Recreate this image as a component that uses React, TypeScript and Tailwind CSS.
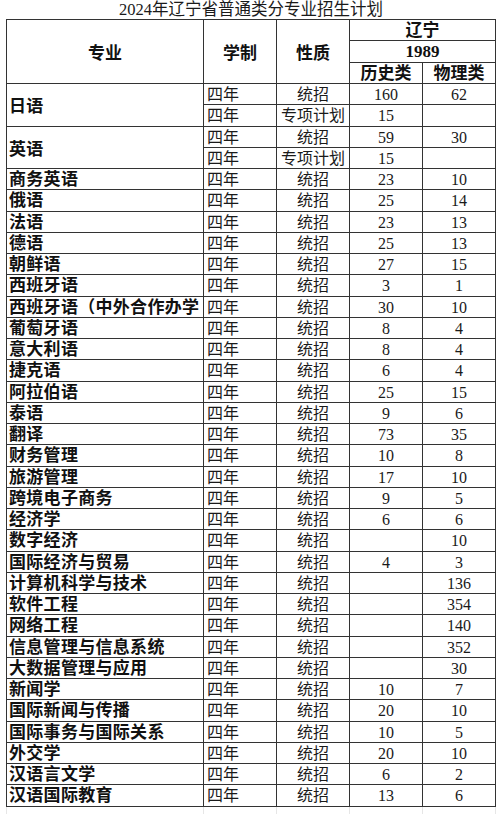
import React from "react";

type Row = { name: string; kind: string; hist: string; phys: string };

const rows: Row[] = [
  { name: "商务英语", kind: "统招", hist: "23", phys: "10" },
  { name: "俄语", kind: "统招", hist: "25", phys: "14" },
  { name: "法语", kind: "统招", hist: "23", phys: "13" },
  { name: "德语", kind: "统招", hist: "25", phys: "13" },
  { name: "朝鲜语", kind: "统招", hist: "27", phys: "15" },
  { name: "西班牙语", kind: "统招", hist: "3", phys: "1" },
  { name: "西班牙语（中外合作办学", kind: "统招", hist: "30", phys: "10" },
  { name: "葡萄牙语", kind: "统招", hist: "8", phys: "4" },
  { name: "意大利语", kind: "统招", hist: "8", phys: "4" },
  { name: "捷克语", kind: "统招", hist: "6", phys: "4" },
  { name: "阿拉伯语", kind: "统招", hist: "25", phys: "15" },
  { name: "泰语", kind: "统招", hist: "9", phys: "6" },
  { name: "翻译", kind: "统招", hist: "73", phys: "35" },
  { name: "财务管理", kind: "统招", hist: "10", phys: "8" },
  { name: "旅游管理", kind: "统招", hist: "17", phys: "10" },
  { name: "跨境电子商务", kind: "统招", hist: "9", phys: "5" },
  { name: "经济学", kind: "统招", hist: "6", phys: "6" },
  { name: "数字经济", kind: "统招", hist: "", phys: "10" },
  { name: "国际经济与贸易", kind: "统招", hist: "4", phys: "3" },
  { name: "计算机科学与技术", kind: "统招", hist: "", phys: "136" },
  { name: "软件工程", kind: "统招", hist: "", phys: "354" },
  { name: "网络工程", kind: "统招", hist: "", phys: "140" },
  { name: "信息管理与信息系统", kind: "统招", hist: "", phys: "352" },
  { name: "大数据管理与应用", kind: "统招", hist: "", phys: "30" },
  { name: "新闻学", kind: "统招", hist: "10", phys: "7" },
  { name: "国际新闻与传播", kind: "统招", hist: "20", phys: "10" },
  { name: "国际事务与国际关系", kind: "统招", hist: "10", phys: "5" },
  { name: "外交学", kind: "统招", hist: "20", phys: "10" },
  { name: "汉语言文学", kind: "统招", hist: "6", phys: "2" },
  { name: "汉语国际教育", kind: "统招", hist: "13", phys: "6" },
];

const cell = "border-r border-b border-[#333333] flex items-center overflow-hidden whitespace-nowrap";
const nameCell = `${cell} pl-[2px] pt-[1px] text-[17px] font-bold tracking-[0.3px] text-[#111111]`;
const yearCell = `${cell} pl-[3px] pt-[2px] text-[16px] text-[#1a1a1a]`;
const centerCell = `${cell} justify-center pt-[2px] text-[16px] text-[#1a1a1a]`;
const headCell = `${cell} justify-center text-[17px] font-bold text-[#111111]`;

function Body({ r }: { r: Row }) {
  return (
    <>
      <div className={nameCell}>{r.name}</div>
      <div className={yearCell}>四年</div>
      <div className={centerCell}>{r.kind}</div>
      <div className={centerCell}>{r.hist}</div>
      <div className={centerCell}>{r.phys}</div>
    </>
  );
}

export default function App() {
  return (
    <div className="w-[500px] h-[814px] bg-white overflow-hidden font-['Liberation_Serif','Noto_Sans_CJK_SC',serif] leading-none">
      <div className="h-[19px] flex items-center justify-center pl-[2px] pt-[1px] text-[16.5px] text-[#1a1a1a]">
        2024年辽宁省普通类分专业招生计划
      </div>
      <div className="ml-[6px] w-[490px] border-l border-t border-[#333333] grid grid-cols-[197px_73px_73px_73px_73px] grid-rows-[21px_22px_21px_repeat(34,21.26px)]">
        <div className={`${headCell} row-span-3 pt-[4px]`}>专业</div>
        <div className={`${headCell} row-span-3 pt-[4px]`}>学制</div>
        <div className={`${headCell} row-span-3 pt-[4px]`}>性质</div>
        <div className={`${headCell} col-span-2`}>辽宁</div>
        <div className={`${headCell} col-span-2`}>1989</div>
        <div className={headCell}>历史类</div>
        <div className={headCell}>物理类</div>

        <div className={`${nameCell} row-span-2 pt-[4px]`}>日语</div>
        <div className={yearCell}>四年</div>
        <div className={centerCell}>统招</div>
        <div className={centerCell}>160</div>
        <div className={centerCell}>62</div>
        <div className={yearCell}>四年</div>
        <div className={centerCell}>专项计划</div>
        <div className={centerCell}>15</div>
        <div className={centerCell}></div>

        <div className={`${nameCell} row-span-2 pt-[4px]`}>英语</div>
        <div className={yearCell}>四年</div>
        <div className={centerCell}>统招</div>
        <div className={centerCell}>59</div>
        <div className={centerCell}>30</div>
        <div className={yearCell}>四年</div>
        <div className={centerCell}>专项计划</div>
        <div className={centerCell}>15</div>
        <div className={centerCell}></div>

        {rows.map((r, i) => (
          <Body key={i} r={r} />
        ))}
      </div>
      <div className="ml-[6px] w-[490px] h-[10px] border-l border-[#e6e6e6] grid grid-cols-[197px_73px_73px_73px_73px]">
        <div className="border-r border-[#e6e6e6]" />
        <div className="border-r border-[#e6e6e6]" />
        <div className="border-r border-[#e6e6e6]" />
        <div className="border-r border-[#e6e6e6]" />
        <div className="border-r border-[#e6e6e6]" />
      </div>
    </div>
  );
}
